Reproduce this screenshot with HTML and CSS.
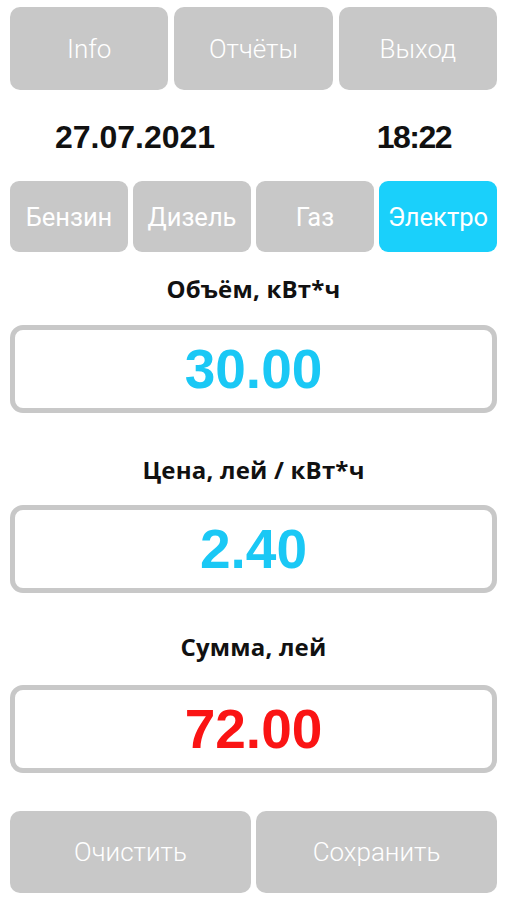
FILE: index.html
```html
<!DOCTYPE html>
<html lang="ru">
<head>
<meta charset="utf-8">
<title>Заправка</title>
<link rel="stylesheet" href="styles.css">
</head>
<body>
<div class="app">
  <div class="row top-row">
    <div class="btn top-btn">Info</div>
    <div class="btn top-btn">Отчёты</div>
    <div class="btn top-btn">Выход</div>
  </div>
  <div class="datetime">
    <span class="date">27.07.2021</span>
    <span class="time">18:22</span>
  </div>
  <div class="row fuel-row">
    <div class="btn fuel-btn">Бензин</div>
    <div class="btn fuel-btn">Дизель</div>
    <div class="btn fuel-btn">Газ</div>
    <div class="btn fuel-btn active">Электро</div>
  </div>
  <div class="label label-1">Объём, кВт*ч</div>
  <div class="field field-1"><span class="value cyan">30.00</span></div>
  <div class="label label-2">Цена, лей / кВт*ч</div>
  <div class="field field-2"><span class="value cyan">2.40</span></div>
  <div class="label label-3">Сумма, лей</div>
  <div class="field field-3"><span class="value red">72.00</span></div>
  <div class="row bottom-row">
    <div class="btn bottom-btn">Очистить</div>
    <div class="btn bottom-btn">Сохранить</div>
  </div>
</div>
</body>
</html>
```
FILE: styles.css
```css
html, body {
  margin: 0;
  padding: 0;
  background: #ffffff;
}
.app {
  width: 506px;
  height: 900px;
  box-sizing: border-box;
  padding: 0 9px 0 10px;
  display: flex;
  flex-direction: column;
  overflow: hidden;
}
.row {
  display: flex;
}
.btn {
  background: #c8c8c8;
  color: #ffffff;
  font-family: Roboto, "Liberation Sans", sans-serif;
  display: flex;
  align-items: center;
  justify-content: center;
  border-radius: 10px;
}
.top-row {
  margin-top: 7px;
  height: 83px;
  gap: 6px;
}
.top-btn {
  flex: 1;
  font-size: 26px;
  font-weight: 300;
}
.datetime {
  margin-top: 31px;
  height: 32px;
  display: flex;
  justify-content: space-between;
  padding: 0 46px 0 45px;
  font-family: "Liberation Sans", Arial, sans-serif;
  font-weight: bold;
  font-size: 32px;
  line-height: 32px;
  color: #111111;
}
.time {
  letter-spacing: -1.5px;
}
.fuel-row {
  margin-top: 28px;
  height: 71px;
  gap: 5px;
}
.fuel-btn {
  flex: 1;
  font-size: 25.5px;
  border-radius: 9px;
}
.fuel-btn.active {
  background: #1ad0fb;
}
.label {
  font-family: "Open Sans", "Noto Sans", sans-serif;
  font-weight: bold;
  font-size: 24px;
  line-height: 22px;
  letter-spacing: 0.2px;
  text-align: center;
  color: #111111;
}
.label-1 { margin-top: 26px; }
.label-2 { margin-top: 46px; }
.label-3 { margin-top: 43px; }
.field {
  height: 88px;
  box-sizing: border-box;
  border: 5px solid #c8c8c8;
  border-radius: 13px;
  display: flex;
  align-items: center;
  justify-content: center;
}
.field-1 { margin-top: 25px; }
.field-2 { margin-top: 24px; }
.field-3 { margin-top: 27px; }
.value {
  font-family: "Liberation Sans", Arial, sans-serif;
  font-weight: bold;
  font-size: 55px;
  line-height: 55px;
}
.cyan { color: #1ac8f5; }
.red { color: #fa1414; }
.bottom-row {
  margin-top: 38px;
  height: 82px;
  gap: 5px;
}
.bottom-btn {
  flex: 1;
  font-size: 26px;
  font-weight: 300;
}
```
